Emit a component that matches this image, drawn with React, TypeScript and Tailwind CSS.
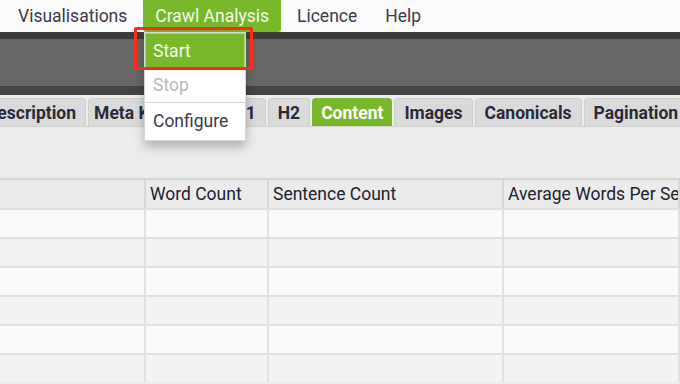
import React from "react";

const menuItems = ["Visualisations", "Crawl Analysis", "Licence", "Help"];

const tabs = [
  { label: "Description", active: false, tight: false },
  { label: "Meta Keywords", active: false, tight: true },
  { label: "H1", active: false, tight: false },
  { label: "H2", active: false, tight: false },
  { label: "Content", active: true, tight: false },
  { label: "Images", active: false, tight: false },
  { label: "Canonicals", active: false, tight: false },
  { label: "Pagination", active: false, tight: false },
  { label: "Directives", active: false, tight: false },
];

const columns = [
  { label: "", width: "w-[146px]" },
  { label: "Word Count", width: "w-[123px]" },
  { label: "Sentence Count", width: "w-[235px]" },
  { label: "Average Words Per Sentence", width: "flex-1" },
];

export default function App() {
  const rows = [0, 1, 2, 3, 4, 5];

  return (
    <div
      className="relative h-[384px] w-[680px] overflow-hidden bg-[#ececec]"
      style={{ fontFamily: "Roboto, 'Liberation Sans', sans-serif" }}
    >
      {/* Menu bar */}
      <div className="flex h-[32px] items-stretch gap-[4px] bg-[#fbfbfb] pl-[6px] text-[17.5px] text-[#3a3a48]">
        {menuItems.map((item) => (
          <div
            key={item}
            className={
              item === "Crawl Analysis"
                ? "flex items-center rounded-b-[3px] bg-[#78b82a] px-[12px] text-[#f4f8ec]"
                : "flex items-center px-[12px]"
            }
          >
            {item}
          </div>
        ))}
      </div>

      {/* Toolbar */}
      <div className="h-[7px] bg-[#3c3c3c]" />
      <div className="h-[47px] bg-[#666666]" />
      <div className="h-[9px] bg-[#444444]" />

      {/* Tabs */}
      <div className="h-[3px]" />
      <div className="-ml-[24px] flex h-[29px] items-stretch gap-[2px] whitespace-nowrap border-b border-[#d0d0d0]">
        {tabs.map((tab) => (
          <div
            key={tab.label}
            className={
              tab.active
                ? "flex items-center rounded-t-[4px] bg-[#78b82a] px-[9px] pt-[2px] text-[17.5px] font-bold text-white"
                : tab.tight
                  ? "flex items-center rounded-t-[4px] border border-b-0 border-[#cfcfcf] bg-[#dadada] px-[5px] pt-[2px] text-[17.5px] font-bold text-[#2a2a3a]"
                  : "flex items-center rounded-t-[4px] border border-b-0 border-[#cfcfcf] bg-[#dadada] px-[9px] pt-[2px] text-[17.5px] font-bold text-[#2a2a3a]"
            }
          >
            {tab.label}
          </div>
        ))}
      </div>

      <div className="h-[51px]" />

      {/* Table */}
      <div className="border-t-2 border-[#d6d6d6]">
        <div className="flex h-[28px] bg-[#ebebeb] text-[17.5px] text-[#222230]">
          {columns.map((col, i) => (
            <div
              key={i}
              className={`${col.width} flex items-center overflow-hidden whitespace-nowrap border-r-2 border-[#d8d8d8] pl-[4px]`}
            >
              {col.label}
            </div>
          ))}
        </div>
        {rows.map((r) => (
          <div
            key={r}
            className={
              r % 2 === 0
                ? "flex h-[29px] border-t-2 border-[#e0e0e0] bg-[#fafafa]"
                : "flex h-[29px] border-t-2 border-[#e0e0e0] bg-[#f3f3f3]"
            }
          >
            {columns.map((col, i) => (
              <div key={i} className={`${col.width} border-r-2 border-[#e2e2e2]`} />
            ))}
          </div>
        ))}
      </div>

      {/* Dropdown menu */}
      <div className="absolute left-[144px] top-[32px] w-[102px] border border-[#d8d8d8] bg-white text-[17.5px] shadow-[0_6px_10px_rgba(0,0,0,0.25)]">
        <div className="flex h-[36px] items-center border border-[#a9d27a] bg-[#78b82a] pl-[7px] text-[#f6faee]">
          Start
        </div>
        <div className="flex h-[33px] items-center pl-[8px] text-[#b8b8b8]">Stop</div>
        <div className="h-[1px] bg-[#d4d4d4]" />
        <div className="flex h-[37px] items-center pl-[8px] text-[#3a3a48]">Configure</div>
      </div>

      {/* Highlight */}
      <div className="absolute left-[134px] top-[27px] h-[43px] w-[119px] rounded-[2px] border-[3px] border-[#ff2a1a]" />
    </div>
  );
}
